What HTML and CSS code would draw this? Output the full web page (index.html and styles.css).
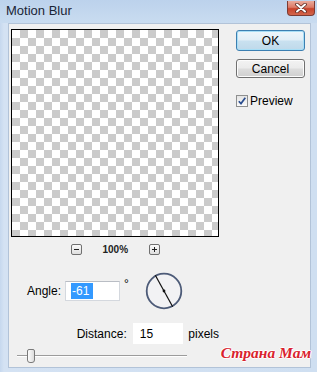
FILE: index.html
```html
<!DOCTYPE html>
<html>
<head>
<meta charset="utf-8">
<link rel="stylesheet" href="styles.css">
</head>
<body>
<div class="window">
  <div class="titlebar">
    <span class="title">Motion Blur</span>
    <div class="close">
      <svg width="14" height="10" viewBox="0 0 14 10"><path d="M3 1.5 L11 8.5 M11 1.5 L3 8.5" stroke="#5a2a22" stroke-width="3.6" stroke-linecap="round"/><path d="M3 1.5 L11 8.5 M11 1.5 L3 8.5" stroke="#fff" stroke-width="2" stroke-linecap="round"/></svg>
    </div>
  </div>
  <div class="dialog">
    <div class="main">
      <div class="left">
        <div class="preview"></div>
        <div class="zoomrow">
          <span class="zbtn"><svg width="9" height="9" viewBox="0 0 9 9"><path d="M2 4.5 H7" stroke="#222" stroke-width="1"/></svg></span>
          <span class="pct">100%</span>
          <span class="zbtn"><svg width="9" height="9" viewBox="0 0 9 9"><path d="M2 4.5 H7 M4.5 2 V7" stroke="#222" stroke-width="1"/></svg></span>
        </div>
        <div class="anglerow">
          <span class="alabel">Angle:</span>
          <span class="field angle"><span class="sel">-61</span></span>
          <span class="deg">°</span>
          <svg class="dial" width="38" height="38" viewBox="0 0 38 38">
            <circle cx="19" cy="19" r="17.3" fill="#f2f2f4" stroke="#4d5b78" stroke-width="1.8"/>
            <path d="M10.3 3.3 L27.7 34.7" stroke="#111" stroke-width="1.2"/>
            <circle cx="19" cy="19" r="1.4" fill="#111"/>
          </svg>
        </div>
        <div class="distrow">
          <span class="dlabel">Distance:</span>
          <span class="field dist">15</span>
          <span class="unit">pixels</span>
        </div>
        <div class="sliderrow">
          <div class="track"></div>
          <div class="thumb"></div>
        </div>
      </div>
      <div class="right">
        <div class="btn ok">OK</div>
        <div class="btn cancel">Cancel</div>
        <label class="check"><span class="box"><svg width="10" height="10" viewBox="0 0 10 10"><path d="M1.8 5.2 L4 7.6 L8.3 1.8" stroke="#2a4d8f" stroke-width="1.7" fill="none"/></svg></span><span>Preview</span></label>
      </div>
    </div>
  </div>
  <div class="watermark">Страна Мам</div>
</div>
</body>
</html>
```
FILE: styles.css
```css
* { box-sizing: border-box; margin: 0; padding: 0; }
html, body { width: 317px; height: 372px; overflow: hidden; }
body { font-family: "Liberation Sans", Arial, sans-serif; font-size: 12px; color: #000; }

.window {
  position: relative;
  width: 317px; height: 372px;
  background: linear-gradient(90deg, #c6d8ee 0, #d4e2f3 4px, #cfdff1 100%);
  display: flex; flex-direction: column;
  padding: 0 6px 4px 8px;
}
.titlebar {
  height: 23px;
  margin: 0 -6px 0 -8px;
  padding: 0 2px 0 6px;
  display: flex; justify-content: space-between; align-items: flex-start;
  background: linear-gradient(#bcd2ec, #c9dcf0);
}
.title { font-size: 13px; line-height: 18px; padding-top: 2px; color: #1a2536; }
.close {
  margin-top: 1px;
  width: 28px; height: 15px;
  border: 1px solid #7d3b32;
  border-top: none;
  border-radius: 0 0 4px 4px;
  background: linear-gradient(#e9ab9c 0, #dd7a66 45%, #c8432b 55%, #d2664c 100%);
  display: flex; align-items: center; justify-content: center;
}

.dialog {
  flex: 1;
  background: #f0f0f0;
  border: 1px solid #b2c3d8;
  padding: 5px 5px 0 2px;
}
.main { display: flex; gap: 17px; }
.left { width: 208px; display: flex; flex-direction: column; }
.right { width: 69px; display: flex; flex-direction: column; }

.preview {
  width: 208px; height: 208px;
  border: 1px solid #000;
  background-color: #fff;
  background-image: conic-gradient(#cbcbcb 25%, #fff 0 50%, #cbcbcb 0 75%, #fff 0);
  background-size: 16px 16px;
}
.zoomrow {
  margin-top: 7px; height: 11px;
  display: flex; justify-content: center; align-items: center; gap: 21px;
}
.zbtn {
  width: 11px; height: 11px;
  border: 1px solid #707070; border-radius: 2px;
  background: linear-gradient(#fbfbfb, #dedede);
  display: flex; align-items: center; justify-content: center;
}
.pct { font-weight: bold; font-size: 10px; width: 25px; text-align: center; color: #222; }

.anglerow { margin-top: 17px; height: 37px; display: flex; align-items: center; }
.alabel { width: 50px; text-align: right; margin-right: 4px; }
.field {
  background: #fff;
  border: 1px solid #d4d8de;
  border-top-color: #b9bdc4;
  display: flex; align-items: center;
}
.angle { width: 55px; height: 20px; padding-left: 5px; }
.sel { background: #3399ff; color: #fff; height: 16px; line-height: 16px; padding: 0 1px; width: 22px; }
.deg { margin-left: 4px; width: 5px; align-self: flex-start; margin-top: 5px; font-size: 12px; }
.dial { margin-left: 16px; display: block; }

.distrow { margin-top: 14px; display: flex; align-items: center; }
.dlabel { width: 125px; text-align: right; margin-right: 6px; }
.dist { width: 54px; height: 21px; padding-left: 6px; border-color: #fff; }
.unit { margin-left: 5px; }

.sliderrow { margin-top: 5px; height: 14px; position: relative; }
.track {
  margin-left: 6px; margin-top: 6px;
  width: 170px; height: 2px;
  border-top: 1px solid #9c9c9c; border-bottom: 1px solid #fff;
}
.thumb {
  position: absolute; left: 16px; top: 0;
  width: 8px; height: 14px;
  border: 1px solid #7a7a7a; border-radius: 2px 2px 3px 3px;
  background: linear-gradient(90deg, #fdfdfd, #dcdcdc);
}

.btn {
  width: 69px;
  display: flex; align-items: center; justify-content: center;
  border-radius: 3px;
  font-size: 12px;
}
.ok {
  margin-top: 1px; height: 21px;
  border: 1px solid #3c7fb1;
  box-shadow: inset 0 0 0 1px #a8def6;
  background: linear-gradient(#eef6fb 0, #e1eef7 48%, #c9e1f0 52%, #bfd9ea 100%);
}
.cancel {
  margin-top: 8px; height: 19px;
  border: 1px solid #707070;
  box-shadow: inset 0 0 0 1px #fcfcfc;
  background: linear-gradient(#f3f3f3 0, #ebebeb 48%, #dddddd 52%, #cfcfcf 100%);
}
.check { margin-top: 16px; display: flex; align-items: center; }
.box {
  width: 12px; height: 12px; margin-right: 2px;
  border: 1px solid #8e8f8f;
  background: linear-gradient(#e4e4e4, #fafafa);
  display: flex; align-items: center; justify-content: center;
}

.watermark {
  position: absolute; right: 6px; top: 344px;
  white-space: nowrap;
  font-family: "Liberation Serif", "Times New Roman", serif;
  font-style: italic; font-weight: bold; font-size: 15.5px; line-height: 18px;
  color: #d9222d;
  text-shadow: 1px 0 #fff, -1px 0 #fff, 0 1px #fff, 0 -1px #fff;
}
```
